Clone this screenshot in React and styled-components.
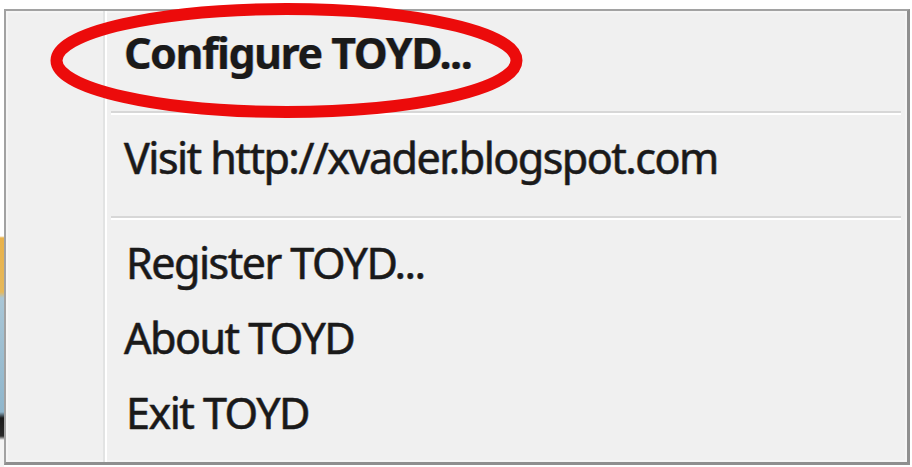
import React from "react";
import styled, { createGlobalStyle } from "styled-components";

const GlobalStyle = createGlobalStyle`
  html, body { margin: 0; padding: 0; background: #ffffff; }
  #root { width: 912px; height: 467px; overflow: hidden; }
`;

const Desktop = styled.div`
  position: relative;
  display: flex;
  align-items: flex-start;
  width: 912px;
  height: 467px;
  box-sizing: border-box;
  padding-top: 9px;
  background: #ffffff;
  font-family: "Noto Sans", "Open Sans", sans-serif;
`;

const DesktopEdge = styled.div`
  width: 4px;
  align-self: stretch;
  margin-top: -9px;
  background: linear-gradient(
    to bottom,
    #ffffff 0px,
    #ffffff 236px,
    #e9b24a 238px,
    #e6b85a 292px,
    #a9c6d6 298px,
    #8fb6cc 412px,
    #1a1a1a 418px,
    #2a2a2a 436px,
    #f4f4f4 440px
  );
`;

const Menu = styled.div`
  display: flex;
  width: 906px;
  height: 456px;
  box-sizing: border-box;
  border: 2px solid #a2a2a2;
  border-right-width: 3px;
  border-bottom-width: 3px;
  border-right-color: #8f8f8f;
  border-bottom-color: #8f8f8f;
  background: #f0f0f0;
  box-shadow: inset 0 0 0 2px #f5f5f5;
`;

const Gutter = styled.div`
  width: 97px;
  flex: none;
  border-right: 2px solid #e2e3e3;
  box-shadow: 2px 0 0 #ffffff;
`;

const Items = styled.div`
  flex: 1;
  display: flex;
  flex-direction: column;
  padding: 4px 6px 0 4px;
`;

const Item = styled.div`
  height: 75px;
  line-height: 75px;
  padding-left: ${(p) => p.$indent || 15}px;
  font-size: 43px;
  font-weight: ${(p) => (p.$bold ? 700 : 400)};
  color: #1a1a1a;
  white-space: nowrap;
  letter-spacing: ${(p) => (p.$bold ? "-1.5px" : "-1.5px")};
  -webkit-text-stroke: ${(p) => (p.$bold ? "0" : "0.4px #1a1a1a")};
  text-shadow: -0.7px 0 0 rgba(200, 140, 40, 0.4), 0.7px 0 0 rgba(40, 90, 200, 0.4);
`;

const Separator = styled.div`
  height: 2px;
  margin: 21px 0 5px 2px;
  background: #d7d7d7;
  border-bottom: 2px solid #ffffff;
`;

const Annotation = styled.svg`
  position: absolute;
  left: 0;
  top: 0;
  width: 912px;
  height: 467px;
  pointer-events: none;
`;

export default function App() {
  return (
    <>
      <GlobalStyle />
      <Desktop>
        <DesktopEdge />
        <Menu>
          <Gutter />
          <Items>
            <Item $bold>Configure TOYD...</Item>
            <Separator />
            <Item>Visit http://xvader.blogspot.com</Item>
            <Separator />
            <Item $indent={17}>Register TOYD...</Item>
            <Item>About TOYD</Item>
            <Item $indent={17}>Exit TOYD</Item>
          </Items>
        </Menu>
        <Annotation viewBox="0 0 912 467">
          <ellipse
            cx="286.5"
            cy="60.5"
            rx="230"
            ry="51.5"
            fill="none"
            stroke="#ec0b0b"
            strokeWidth="12"
          />
        </Annotation>
      </Desktop>
    </>
  );
}
